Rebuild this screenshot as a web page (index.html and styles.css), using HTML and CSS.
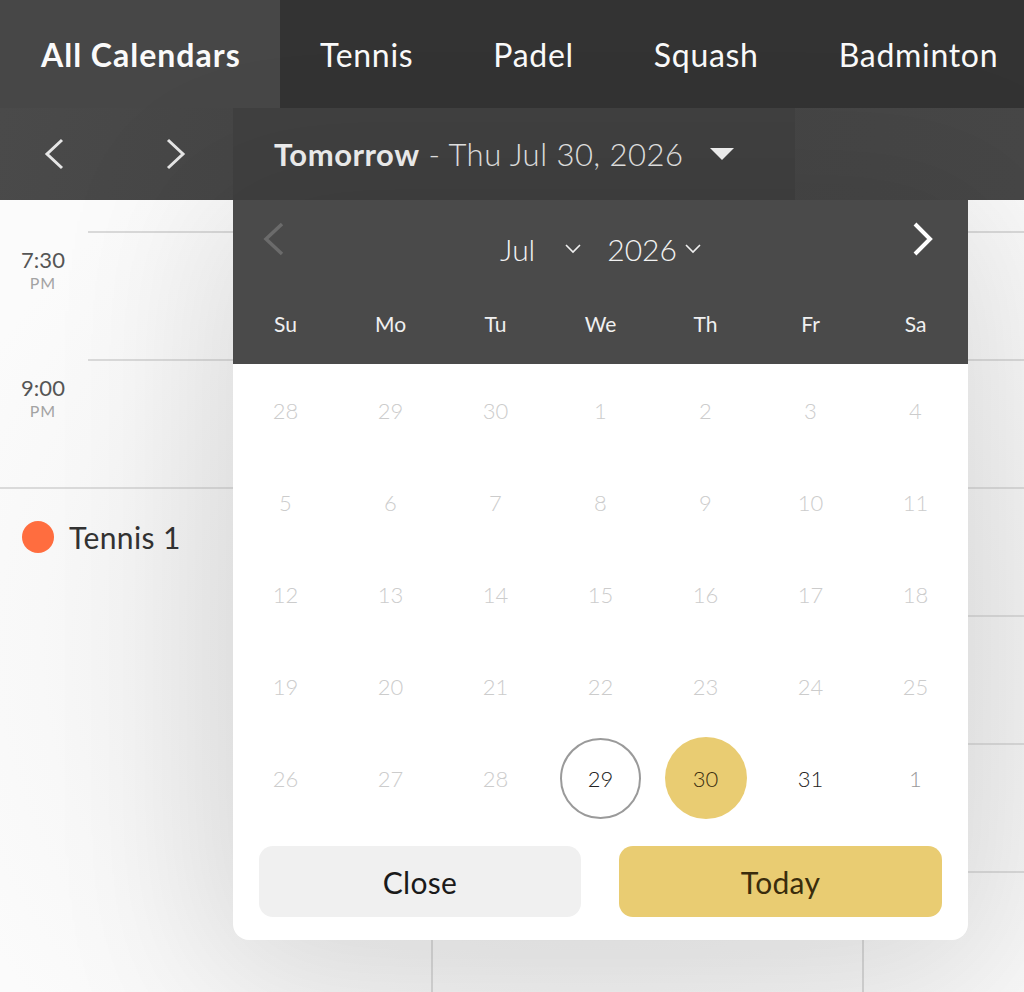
FILE: index.html
```html
<!DOCTYPE html>
<html lang="en">
<head>
  <meta charset="UTF-8" />
  <meta name="viewport" content="width=device-width, initial-scale=1.0"/>
  <title>Court Calendar</title>
  <link rel="stylesheet" href="styles.css">
</head>
<body>
<nav class="tabs">
    <a class="tab active">All Calendars</a>
    <a class="tab">Tennis</a>
    <a class="tab">Padel</a>
    <a class="tab">Squash</a>
    <a class="tab">Badminton</a>
</nav>

<div class="toolbar">
    <div class="day-nav">
        <svg width="20" height="32" viewBox="0 0 20 32"><polyline points="18,2 3,16 18,30" fill="none" stroke="#e6e6e6" stroke-width="3"/></svg>
        <svg width="20" height="32" viewBox="0 0 20 32"><polyline points="2,2 17,16 2,30" fill="none" stroke="#e6e6e6" stroke-width="3"/></svg>
    </div>
    <div class="date-field">
        <span class="date-label"><strong>Tomorrow</strong> - Thu Jul 30, 2026</span>
        <svg width="24" height="12" viewBox="0 0 24 12"><polygon points="0,0 24,0 12,12" fill="#f2f2f2"/></svg>
    </div>
</div>

<main class="board">
    <div class="slots">
        <div class="slot">
            <div class="time">7:30<small>PM</small></div>
            <div class="lane"></div>
        </div>
        <div class="slot">
            <div class="time">9:00<small>PM</small></div>
            <div class="lane"></div>
        </div>
    </div>

    <div class="courts">
        <div class="court-name"><span class="dot"></span>Tennis 1</div>
        <div class="court-col"></div>
        <div class="court-col"></div>
    </div>

    <div class="picker">
        <div class="picker-head">
            <div class="month-nav">
                <button class="arrow">
                    <svg width="22" height="34" viewBox="0 0 22 34"><polyline points="19,2 3,17 19,32" fill="none" stroke="#6b6b6b" stroke-width="3.5"/></svg>
                </button>
                <div class="selects">
                    <span class="select">Jul <svg width="16" height="10" viewBox="0 0 16 10"><polyline points="1,1 8,8 15,1" fill="none" stroke="#f0f0f0" stroke-width="1.6"/></svg></span>
                    <span class="select year">2026 <svg width="16" height="10" viewBox="0 0 16 10"><polyline points="1,1 8,8 15,1" fill="none" stroke="#f0f0f0" stroke-width="1.6"/></svg></span>
                </div>
                <button class="arrow right">
                    <svg width="22" height="34" viewBox="0 0 22 34"><polyline points="3,2 18,17 3,32" fill="none" stroke="#ffffff" stroke-width="4"/></svg>
                </button>
            </div>
            <div class="weekdays">
                <span>Su</span><span>Mo</span><span>Tu</span><span>We</span><span>Th</span><span>Fr</span><span>Sa</span>
            </div>
        </div>
        <div class="days" id="days"></div>
        <div class="actions">
            <button class="btn close">Close</button>
            <button class="btn today">Today</button>
        </div>
    </div>
</main>

<script>
    // July 2026 grid, trailing June and leading August days greyed out
    const cells = [
        28,29,30,1,2,3,4,
        5,6,7,8,9,10,11,
        12,13,14,15,16,17,18,
        19,20,21,22,23,24,25,
        26,27,28,29,30,31,1
    ];
    const states = { 31: "current", 32: "selected", 33: "", 34: "next" };
    const grid = document.getElementById("days");
    cells.forEach((d, i) => {
        const el = document.createElement("span");
        const state = i in states ? states[i] : "off";
        el.className = "day " + state;
        el.innerHTML = "<b>" + d + "</b>";
        grid.appendChild(el);
    });
</script>
</body>
</html>
```

FILE: styles.css
```css
* { box-sizing: border-box; }

body {
  margin: 0;
  font-family: 'Lato', 'Noto Sans', sans-serif;
  background-color: #f4f4f4;
  color: #333;
  overflow: hidden;
  height: 992px;
}

button {
  font-family: inherit;
  border: none;
  background: none;
  padding: 0;
  cursor: pointer;
}

/* top calendar tabs */
.tabs {
  display: flex;
  height: 108px;
  background-color: #333;
}

.tab {
  flex: none;
  display: flex;
  align-items: center;
  white-space: nowrap;
  color: #fafafa;
  font-size: 32px;
  letter-spacing: 0.7px;
  padding: 0 40px;
}

.tab.active {
  width: 280px;
  padding: 0 0 0 41px;
  background-color: #474747;
  font-weight: 700;
  letter-spacing: 1px;
}

/* date switcher */
.toolbar {
  display: flex;
  height: 92px;
  background: linear-gradient(100deg, #4a4a4a 0%, #434343 40%, #474747 100%);
}

.day-nav {
  width: 233px;
  display: flex;
  align-items: center;
  gap: 102px;
  padding-left: 44px;
}

.date-field {
  width: 562px;
  display: flex;
  align-items: center;
  padding-left: 41px;
  gap: 26px;
  background-color: #404040;
  color: #e4e4e4;
}

.date-label {
  font-size: 31px;
  font-weight: 300;
  letter-spacing: 0.5px;
}

.date-label strong {
  font-weight: 700;
  color: #f0f0f0;
}

/* schedule board */
.board {
  position: relative;
  height: 792px;
  background: radial-gradient(ellipse 700px 600px at 600px 450px, #e6e6e6 0%, #efefef 45%, #f8f8f8 80%, #fbfbfb 100%);
}

.slots {
  padding-top: 31px;
}

.slot {
  display: flex;
  height: 128px;
}

.time {
  width: 86px;
  text-align: center;
  padding-top: 17px;
  font-size: 22px;
  color: #555;
  line-height: 24px;
}

.time small {
  display: block;
  font-size: 16px;
  color: #a3a3a3;
  letter-spacing: 1px;
  line-height: 22px;
}

.lane {
  flex: 1;
  margin-left: 2px;
  border-top: 2px solid #dadada;
}

.courts {
  display: grid;
  grid-template-columns: 431px 431px 1fr;
  height: 505px;
  border-top: 2px solid #dadada;
}

.court-name {
  display: flex;
  align-items: flex-start;
  gap: 15px;
  padding: 31px 0 0 22px;
  font-size: 30px;
  letter-spacing: 0.4px;
  line-height: 34px;
  color: #333;
}

.dot {
  width: 32px;
  height: 32px;
  border-radius: 50%;
  background-color: #ff6d3f;
  margin-top: 1px;
}

.court-col {
  border-left: 2px solid #d6d6d6;
  background: repeating-linear-gradient(to bottom, transparent 0, transparent 126px, #dadada 126px, #dadada 128px);
}

/* date picker dropdown */
.picker {
  position: absolute;
  left: 233px;
  top: 0;
  width: 735px;
  background-color: #fff;
  border-radius: 0 0 16px 16px;
  box-shadow: 0 20px 160px 30px rgba(0,0,0,0.10);
}

.picker-head {
  background-color: #4a4a4a;
  color: #f2f2f2;
  height: 164px;
}

.month-nav {
  display: grid;
  grid-template-columns: 105px 1fr 105px;
  align-items: center;
  height: 90px;
}

.arrow {
  display: flex;
  padding-bottom: 12px;
}

.arrow:first-child { justify-content: flex-start; padding-left: 30px; }
.arrow.right { justify-content: flex-end; padding-right: 34px; }

.selects {
  display: flex;
  justify-content: center;
  gap: 26px;
  font-size: 30px;
  font-weight: 300;
  padding-top: 8px;
}

.select {
  display: flex;
  align-items: center;
  gap: 30px;
}

.select.year { gap: 8px; }

.weekdays {
  display: grid;
  grid-template-columns: repeat(7, 1fr);
  text-align: center;
  font-size: 21px;
  padding-top: 21px;
  color: #f0f0f0;
}

.days {
  display: grid;
  grid-template-columns: repeat(7, 105px);
  grid-auto-rows: 92px;
}

.day {
  display: flex;
  align-items: center;
  justify-content: center;
  font-size: 22px;
  color: #222;
}

.day b {
  font-weight: 300;
  width: 82px;
  height: 82px;
  border-radius: 50%;
  display: flex;
  align-items: center;
  justify-content: center;
}

.day.off { color: #cccccc; }
.day.next { color: #999; }

.day.current b {
  border: 2px solid #9a9a9a;
  width: 81px;
  height: 81px;
}

.day.selected b {
  background-color: #e9cc72;
  color: #3a2e10;
}

.actions {
  display: grid;
  grid-template-columns: 322px 323px;
  justify-content: space-between;
  padding: 22px 26px 23px;
}

.btn {
  height: 71px;
  border-radius: 14px;
  font-size: 30px;
  letter-spacing: 0.3px;
  color: #1a1a1a;
}

.btn.close { background-color: #f0f0f0; }
.btn.today { background-color: #e9cc72; color: #3a2c0c; }
```
